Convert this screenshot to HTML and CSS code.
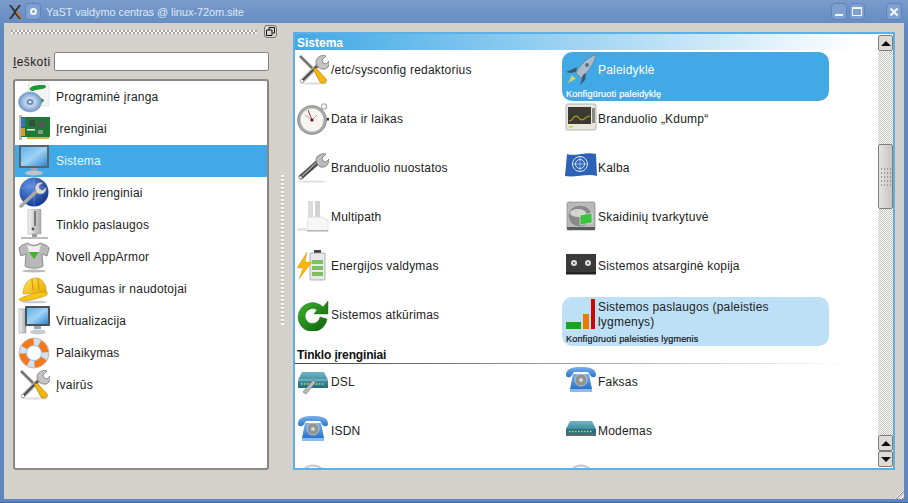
FILE: index.html
```html
<!DOCTYPE html>
<html lang="lt">
<head>
    <meta charset="UTF-8">
    <title>YaST valdymo centras</title>
    <link rel="stylesheet" href="styles.css">
</head>
<body>
    <svg class="sprite" width="0" height="0">
        <defs>
            <linearGradient id="g-steel" x1="0" y1="0" x2="1" y2="1"><stop offset="0" stop-color="#e4e4e4"/><stop offset="1" stop-color="#6c6c6c"/></linearGradient>
            <linearGradient id="g-screen" x1="0" y1="0" x2="1" y2="1"><stop offset="0" stop-color="#5fb2ea"/><stop offset=".5" stop-color="#9fd2f4"/><stop offset="1" stop-color="#2f86cf"/></linearGradient>
            <linearGradient id="g-phone" x1="0" y1="0" x2="0" y2="1"><stop offset="0" stop-color="#79b1ea"/><stop offset="1" stop-color="#2b74cc"/></linearGradient>
            <linearGradient id="g-modem" x1="0" y1="0" x2="0" y2="1"><stop offset="0" stop-color="#6fb6c4"/><stop offset="1" stop-color="#1f6d86"/></linearGradient>
            <linearGradient id="g-green" x1="0" y1="0" x2="1" y2="1"><stop offset="0" stop-color="#3fb52c"/><stop offset="1" stop-color="#0b5f0b"/></linearGradient>
            <linearGradient id="g-tower" x1="0" y1="0" x2="1" y2="0"><stop offset="0" stop-color="#f4f4f4"/><stop offset="1" stop-color="#a9a9a9"/></linearGradient>
            <radialGradient id="g-globe" cx=".35" cy=".3" r=".8"><stop offset="0" stop-color="#5d92e0"/><stop offset="1" stop-color="#0c2f8c"/></radialGradient>
            <radialGradient id="g-disk" cx=".5" cy=".5" r=".5"><stop offset="0" stop-color="#f1f5fb"/><stop offset=".6" stop-color="#a9c4e6"/><stop offset="1" stop-color="#6f95c9"/></radialGradient>
            <linearGradient id="g-hat" x1="0" y1="0" x2="1" y2="1"><stop offset="0" stop-color="#ffe25a"/><stop offset="1" stop-color="#e8a800"/></linearGradient>
        </defs>
        <symbol id="i-software" viewBox="0 0 32 32">
            <path d="M11 1l15 0 5 3 0 21-22 0z" fill="#f3f3f3" stroke="#cfcfcf" stroke-width=".5"/>
            <path d="M12 7c3-3 8-3 13-3 3 0 4 2 2 3-3 2-9 1-12 3-2 0-4-1-3-3z" fill="#1f9a2e"/>
            <path d="M20 17c3 0 6 1 6 3l-5 4-3-2z" fill="#1f9a2e"/>
            <ellipse cx="12" cy="21" rx="11.500" ry="10" fill="url(#g-disk)" stroke="#7b9ac6" stroke-width=".6"/>
            <ellipse cx="12" cy="21" rx="3.600" ry="3" fill="#6f8fb8"/>
            <ellipse cx="12" cy="21" rx="1.400" ry="1.100" fill="#fff"/>
        </symbol>
        <symbol id="i-card" viewBox="0 0 32 32">
            <rect x="1" y="2" width="3" height="25" fill="#bcbcbc"/>
            <rect x="3" y="4" width="29" height="20" fill="#1f7a33"/>
            <rect x="3" y="5" width="4" height="9" fill="#3d6fc4"/>
            <rect x="3" y="15" width="4" height="8" fill="#d89b2a"/>
            <rect x="11" y="7" width="6" height="6" fill="#3b4a40"/>
            <rect x="20" y="8" width="7" height="7" fill="#4e5a52"/>
            <rect x="9" y="16" width="8" height="1.500" fill="#eee"/>
            <rect x="20" y="17" width="5" height="4" fill="#8a948c"/>
            <rect x="9" y="24" width="22" height="2" fill="#d9b23a"/>
        </symbol>
        <symbol id="i-monitor" viewBox="0 0 32 32">
            <rect x="1" y="0" width="30" height="23" rx="1" fill="#5c6268"/>
            <rect x="3" y="2" width="26" height="19" fill="url(#g-screen)"/>
            <rect x="13" y="23" width="6" height="3" fill="#9aa5ae"/>
            <ellipse cx="16" cy="28" rx="9" ry="2.600" fill="#b9c4cc"/>
        </symbol>
        <symbol id="i-netwrench" viewBox="0 0 32 32">
            <circle cx="16" cy="15" r="14.500" fill="url(#g-globe)"/>
            <path d="M3 12c8-3 18-3 26 0M16 1v28" stroke="#7ea4e4" stroke-width=".5" fill="none"/>
            <path d="M3 29L19 14" stroke="url(#g-steel)" stroke-width="3.600" stroke-linecap="round"/>
            <path d="M17 11c0-4 4-7 8-5l-4 3 1 3 3 1 3-3c1 5-3 8-7 7-2 0-4-3-4-6z" fill="#d9d9d9" stroke="#666" stroke-width=".6"/>
        </symbol>
        <symbol id="i-server" viewBox="0 0 32 32">
            <rect x="10" y="0" width="13" height="25" fill="url(#g-tower)" stroke="#9a9a9a" stroke-width=".5"/>
            <path d="M17 2v15" stroke="#666" stroke-width="1.600"/>
            <circle cx="15" cy="20" r="1.400" fill="#555"/>
            <rect x="14" y="25" width="5" height="3" fill="#9a9a9a"/>
            <rect x="3" y="28" width="27" height="2" fill="#bcbcbc"/>
        </symbol>
        <symbol id="i-armor" viewBox="0 0 32 32">
            <path d="M1 8c0-3 5-5 9-6 3 3 9 3 12 0 4 1 9 3 9 6l-2 7-5-2 1 12c-3 3-15 3-18 0l1-12-5 2z" fill="#b9b9b9" stroke="#6a6a6a" stroke-width=".7"/>
            <path d="M9 3c3 3 11 3 14 0l-2 8H11z" fill="#eee"/>
            <path d="M11 11h10l-5 7z" fill="#41b52c"/>
            <ellipse cx="16" cy="30" rx="12" ry="1.500" fill="#8b8b8b" opacity=".6"/>
        </symbol>
        <symbol id="i-hat" viewBox="0 0 32 32">
            <path d="M5 21C5 11 11 5 18 5c6 0 11 6 10 15z" fill="url(#g-hat)" stroke="#c48d00" stroke-width=".5"/>
            <path d="M14 6l1 11M20 5l1 12" stroke="#d99f00" stroke-width="1.400" fill="none"/>
            <path d="M1 26c6-3 20-8 28-7 1 2 0 3-2 4-6 2-16 5-23 5-2 0-3-1-3-2z" fill="#f7c514" stroke="#b98500" stroke-width=".5"/>
            <ellipse cx="16" cy="29" rx="13" ry="1.300" fill="#999" opacity=".5"/>
        </symbol>
        <symbol id="i-virtual" viewBox="0 0 32 32">
            <rect x="1" y="4" width="7" height="24" fill="url(#g-tower)" stroke="#8a8a8a" stroke-width=".5"/>
            <rect x="7" y="1" width="25" height="20" rx="1" fill="#4c5157"/>
            <rect x="9" y="3" width="21" height="16" fill="url(#g-screen)"/>
            <rect x="16" y="21" width="7" height="3" fill="#9aa5ae"/>
            <ellipse cx="20" cy="27" rx="8" ry="2.400" fill="#c4ccd2"/>
        </symbol>
        <symbol id="i-buoy" viewBox="0 0 32 32">
            <circle cx="16" cy="16" r="15" fill="none" stroke="#a9a9a9" stroke-width=".8"/>
            <circle cx="16" cy="16" r="11" fill="none" stroke="#f07a1c" stroke-width="7"/>
            <circle cx="16" cy="16" r="11" fill="none" stroke="#cfe2f7" stroke-width="7" stroke-dasharray="6 11.280" transform="rotate(-3 16 16)"/>
            <circle cx="16" cy="16" r="7.500" fill="#fff" stroke="#9dc2ee" stroke-width="1"/>
        </symbol>
        <symbol id="i-tools" viewBox="0 0 32 32">
            <ellipse cx="17" cy="29.500" rx="13" ry="1.200" fill="#bbb" opacity=".5"/>
            <path d="M2 3l2-2 15 15-2 2z" fill="#777"/>
            <path d="M5 27L22 10" stroke="url(#g-steel)" stroke-width="4.500" stroke-linecap="round"/>
            <path d="M5 27L20 12" stroke="#333" stroke-width="1.400"/>
            <circle cx="5" cy="27" r="1.200" fill="#fff"/>
            <path d="M19 8c0-4 5-8 10-6l-4 4 1 3 3 1 3-3c1 5-2 9-7 8-2 0-6-3-6-7z" fill="#c4c4c4" stroke="#6a6a6a" stroke-width=".7"/>
            <path d="M16 15l3-1 10 11c1 2 0 4-3 4-1 0-2 0-3-1z" fill="#f5b70a" stroke="#97700a" stroke-width=".6"/>
        </symbol>
        <symbol id="i-clock" viewBox="0 0 32 32">
            <circle cx="27" cy="3.500" r="2.600" fill="none" stroke="#b5b5b5" stroke-width="1.400"/>
            <rect x="29.500" y="15" width="2.500" height="2.500" fill="#333"/>
            <circle cx="15" cy="17" r="14.500" fill="#a9a9a9" stroke="#7a7a7a" stroke-width=".7"/>
            <circle cx="15" cy="17" r="11.500" fill="#f7f4f2"/>
            <path d="M15 17L11 7" stroke="#c22" stroke-width="1"/>
            <path d="M15 17L8 12M15 17l5-5" stroke="#999" stroke-width=".8"/>
            <circle cx="15" cy="17" r="1.600" fill="#611"/>
        </symbol>
        <symbol id="i-wrench" viewBox="0 0 32 32">
            <ellipse cx="15" cy="29.500" rx="14" ry="1" fill="#bbb" opacity=".5"/>
            <path d="M4 25L21 10" stroke="#4c4c4c" stroke-width="5" stroke-linecap="round"/>
            <path d="M5 24L19 11" stroke="#aaa" stroke-width="1.200"/>
            <circle cx="3.500" cy="25.500" r="1.300" fill="#fff"/>
            <path d="M19 8c0-4 5-7 10-6l-4 4 1 3 3 1 3-3c0 5-3 9-8 8-2 0-5-3-5-7z" fill="#bcbcbc" stroke="#666" stroke-width=".7"/>
        </symbol>
        <symbol id="i-multipath" viewBox="0 0 32 32">
            <rect x="11" y="0" width="5" height="22" fill="#dcdcdc"/>
            <rect x="18" y="0" width="5" height="18" fill="#d2d2d2"/>
            <path d="M11 16h14l6 3v11H10z" fill="#f6f6f6" stroke="#c9c9c9" stroke-width=".5"/>
            <rect x="0" y="27" width="10" height="3" fill="#e4e4e4"/>
            <rect x="10" y="29" width="21" height="1.500" fill="#b5b5b5"/>
        </symbol>
        <symbol id="i-battery" viewBox="0 0 32 32">
            <rect x="17" y="0" width="7" height="3" fill="#444"/>
            <rect x="13" y="3" width="15" height="27" rx="1" fill="#e9e9e9" stroke="#999" stroke-width=".7"/>
            <rect x="15" y="10" width="11" height="4" fill="#7dc25d"/>
            <rect x="15" y="16" width="11" height="4" fill="#7dc25d"/>
            <rect x="15" y="22" width="11" height="4" fill="#7dc25d"/>
            <path d="M10 2L0 18h6L2 29l13-17H8z" fill="#f7b611" stroke="#d98d00" stroke-width=".4"/>
        </symbol>
        <symbol id="i-refresh" viewBox="0 0 32 32">
            <path d="M26 8A14.500 14.500 0 1 0 30 20l-7-2a7.500 7.500 0 1 1-3-7l-3 4h14V2z" fill="url(#g-green)" stroke="#0b5f0b" stroke-width=".4"/>
        </symbol>
        <symbol id="i-rocket" viewBox="0 0 32 32">
            <path d="M3 29L7 21l4 4z" fill="#c9d46a"/>
            <path d="M31 1C22 3 15 11 11 19l5 5C23 18 29 10 31 1z" fill="#a9bccc" stroke="#53697d" stroke-width=".5"/>
            <path d="M12 13L1 18l4 1 6-1zM18 21l-3 10 5-5 1-7z" fill="#3f5870"/>
            <circle cx="22" cy="11" r="2" fill="#54708a"/>
        </symbol>
        <symbol id="i-kdump" viewBox="0 0 32 32">
            <rect x="1" y="1" width="30" height="26" rx="2" fill="#e9e7df" stroke="#9a9a9a" stroke-width=".7"/>
            <rect x="3" y="4" width="23" height="17" fill="#3a3a30"/>
            <path d="M4 18c4 0 4-5 7-5s3 4 6 4 3-4 8-4" stroke="#b6a92c" stroke-width="1.200" fill="none"/>
            <rect x="27" y="5" width="3" height="15" fill="#8a8a8a"/>
            <rect x="4" y="23" width="4" height="1.600" fill="#cc3"/>
        </symbol>
        <symbol id="i-flag" viewBox="0 0 32 32">
            <path d="M2 2c8 3 20-3 29 0l1 22c-9-3-22 2-32 0z" fill="#2c62b8"/>
            <circle cx="15" cy="12" r="7.500" fill="none" stroke="#dfe9f7" stroke-width="1"/>
            <circle cx="15" cy="12" r="4.500" fill="none" stroke="#dfe9f7" stroke-width="1"/>
            <path d="M15 5v14M8 12h14" stroke="#dfe9f7" stroke-width=".6"/>
        </symbol>
        <symbol id="i-disk" viewBox="0 0 32 32">
            <rect x="2" y="1" width="28" height="28" rx="2" fill="#b9b9b9" stroke="#777" stroke-width=".6"/>
            <ellipse cx="15" cy="15" rx="12" ry="11" fill="#8a8a8a" stroke="#ddd" stroke-width=".6"/>
            <ellipse cx="13" cy="12" rx="8" ry="4" fill="#d4d4d4"/>
            <path d="M15 14l12-2 0 10-12 2z" fill="#3fc23f" stroke="#fff" stroke-width=".5"/>
            <rect x="2" y="26" width="28" height="3" fill="#5a5a5a"/>
        </symbol>
        <symbol id="i-tape" viewBox="0 0 32 32">
            <rect x="1" y="4" width="30" height="20" fill="#3a3a3a"/>
            <rect x="1" y="22" width="30" height="2.500" fill="#222"/>
            <circle cx="9" cy="13" r="3" fill="#dcdcdc"/>
            <circle cx="23" cy="13" r="3" fill="#dcdcdc"/>
            <circle cx="9" cy="13" r="1" fill="#555"/>
            <circle cx="23" cy="13" r="1" fill="#555"/>
        </symbol>
        <symbol id="i-levels" viewBox="0 0 32 32">
            <rect x="1" y="23" width="15" height="7" fill="#1ba51b"/>
            <rect x="18" y="15" width="6" height="15" fill="#ea7a06"/>
            <rect x="26" y="0" width="4" height="30" fill="#c90808"/>
        </symbol>
        <symbol id="i-dsl" viewBox="0 0 32 32">
            <path d="M5 6h22l4 8v8H1v-8z" fill="url(#g-modem)"/>
            <path d="M1 14h30" stroke="#d7eef2" stroke-width=".6"/>
            <path d="M4 18h24" stroke="#b4dd6a" stroke-width="1.400" stroke-dasharray="1.500 1.500"/>
            <path d="M6 26l10-12 3 2L9 28z" fill="#bcbcbc" stroke="#555" stroke-width=".5"/>
        </symbol>
        <symbol id="i-phone" viewBox="0 0 32 32">
            <path d="M1 9C1 2 8 1 16 1s15 1 15 8c0 3-5 3-6 0-1-1-1-3-3-3H10C8 6 8 8 7 9c-1 3-6 3-6 0z" fill="url(#g-phone)"/>
            <path d="M8 8h16l3 15H5z" fill="url(#g-phone)"/>
            <rect x="5" y="23" width="22" height="3" fill="#8cbcee"/>
            <circle cx="16" cy="14" r="6" fill="#8f9490" stroke="#ccd" stroke-width=".8"/>
            <circle cx="16" cy="14" r="2" fill="#d4d6d2"/>
        </symbol>
        <symbol id="i-modem" viewBox="0 0 32 32">
            <path d="M5 6h22l4 8v6H1v-6z" fill="url(#g-modem)"/>
            <rect x="1" y="14" width="30" height="5" fill="#2b6f80"/>
            <path d="M4 16.500h24" stroke="#b4dd6a" stroke-width="1.600" stroke-dasharray="1.500 1.500"/>
            <rect x="1" y="19" width="30" height="2" fill="#666"/>
        </symbol>
        <symbol id="i-wifi" viewBox="0 0 32 32">
            <path d="M6 6c6-6 14-6 20 0M10 9c4-3 8-3 12 0" stroke="#b8c9e4" stroke-width="2" fill="none"/>
        </symbol>
    </svg>

    <div class="window">
        <div class="titlebar">
            <svg class="logo" viewBox="0 0 16 16" width="16" height="16">
                <path d="M2 1l5 7-5 7h2l4-5 4 5h2L9 8l5-7h-2L8 6 4 1z" fill="#333"/>
                <path d="M9 9l4 5h2l-5-7z" fill="#c8741c"/>
            </svg>
            <span class="title-btn menu-btn"><span class="menu-dot"></span></span>
            <span class="title-text">YaST valdymo centras @ linux-72om.site</span>
            <span class="title-btn min-btn"><span class="min-glyph"></span></span>
            <span class="title-btn"><span class="max-glyph"></span></span>
            <span class="title-btn close-btn">
                <svg viewBox="0 0 10 10" width="10" height="10"><path d="M1.500 1.500l7 7M8.500 1.500l-7 7" stroke="#f2f6fb" stroke-width="2.400"/></svg>
            </span>
        </div>

        <div class="client">
            <div class="left">
                <div class="toolbar">
                    <div class="handle"></div>
                    <span class="dock-btn">
                        <svg viewBox="0 0 9 9" width="9" height="9"><path d="M3 .5h5.500V6H6.500M.5 3H6v5.500H.5zM3 3V.5" fill="none" stroke="#111" stroke-width="1"/></svg>
                    </span>
                </div>
                <div class="search">
                    <label class="search-label" for="q"><u>I</u>eškoti</label>
                    <input id="q" class="search-input" type="text">
                </div>
                <div class="list">
                    <div class="row"><svg class="ico"><use href="#i-software"/></svg>Programinė įranga</div>
                    <div class="row"><svg class="ico"><use href="#i-card"/></svg>Įrenginiai</div>
                    <div class="row selected"><svg class="ico"><use href="#i-monitor"/></svg>Sistema</div>
                    <div class="row"><svg class="ico"><use href="#i-netwrench"/></svg>Tinklo įrenginiai</div>
                    <div class="row"><svg class="ico"><use href="#i-server"/></svg>Tinklo paslaugos</div>
                    <div class="row"><svg class="ico"><use href="#i-armor"/></svg>Novell AppArmor</div>
                    <div class="row"><svg class="ico"><use href="#i-hat"/></svg>Saugumas ir naudotojai</div>
                    <div class="row"><svg class="ico"><use href="#i-virtual"/></svg>Virtualizacija</div>
                    <div class="row"><svg class="ico"><use href="#i-buoy"/></svg>Palaikymas</div>
                    <div class="row"><svg class="ico"><use href="#i-tools"/></svg>Įvairūs</div>
                </div>
            </div>

            <div class="splitter"><div class="splitter-dots"></div></div>

            <div class="panel">
                <div class="content">
                    <div class="group-title first">Sistema</div>
                    <div class="items">
                        <div class="item"><div class="item-top"><svg class="ico"><use href="#i-tools"/></svg><span>/etc/sysconfig redaktorius</span></div></div>
                        <div class="item active"><div class="item-top"><svg class="ico"><use href="#i-rocket"/></svg><span>Paleidyklė</span></div><div class="item-desc">Konfigūruoti paleidyklę</div></div>
                        <div class="item"><div class="item-top"><svg class="ico"><use href="#i-clock"/></svg><span>Data ir laikas</span></div></div>
                        <div class="item"><div class="item-top"><svg class="ico"><use href="#i-kdump"/></svg><span>Branduolio „Kdump“</span></div></div>
                        <div class="item"><div class="item-top"><svg class="ico"><use href="#i-wrench"/></svg><span>Branduolio nuostatos</span></div></div>
                        <div class="item"><div class="item-top"><svg class="ico"><use href="#i-flag"/></svg><span>Kalba</span></div></div>
                        <div class="item"><div class="item-top"><svg class="ico"><use href="#i-multipath"/></svg><span>Multipath</span></div></div>
                        <div class="item"><div class="item-top"><svg class="ico"><use href="#i-disk"/></svg><span>Skaidinių tvarkytuvė</span></div></div>
                        <div class="item"><div class="item-top"><svg class="ico"><use href="#i-battery"/></svg><span>Energijos valdymas</span></div></div>
                        <div class="item"><div class="item-top"><svg class="ico"><use href="#i-tape"/></svg><span>Sistemos atsarginė kopija</span></div></div>
                        <div class="item"><div class="item-top"><svg class="ico"><use href="#i-refresh"/></svg><span>Sistemos atkūrimas</span></div></div>
                        <div class="item hover"><div class="item-top"><svg class="ico"><use href="#i-levels"/></svg><span>Sistemos paslaugos (paleisties lygmenys)</span></div><div class="item-desc">Konfigūruoti paleisties lygmenis</div></div>
                    </div>
                    <div class="group-title second">Tinklo įrenginiai</div>
                    <div class="items">
                        <div class="item"><div class="item-top"><svg class="ico"><use href="#i-dsl"/></svg><span>DSL</span></div></div>
                        <div class="item"><div class="item-top"><svg class="ico"><use href="#i-phone"/></svg><span>Faksas</span></div></div>
                        <div class="item"><div class="item-top"><svg class="ico"><use href="#i-phone"/></svg><span>ISDN</span></div></div>
                        <div class="item"><div class="item-top"><svg class="ico"><use href="#i-modem"/></svg><span>Modemas</span></div></div>
                        <div class="item"><div class="item-top"><svg class="ico"><use href="#i-wifi"/></svg></div></div>
                        <div class="item"><div class="item-top"><svg class="ico"><use href="#i-wifi"/></svg></div></div>
                    </div>
                </div>
                <div class="scrollbar">
                    <span class="sb-btn"><span class="arrow-up"></span></span>
                    <div class="sb-track sb-track-top"></div>
                    <div class="sb-thumb"><div class="sb-grip"></div></div>
                    <div class="sb-track sb-track-rest"></div>
                    <span class="sb-btn"><span class="arrow-up"></span></span>
                    <span class="sb-btn"><span class="arrow-down"></span></span>
                </div>
            </div>
            <div class="grip"></div>
        </div>
    </div>
</body>
</html>
```

FILE: styles.css
```css
* {
    box-sizing: border-box;
}
html, body {
    margin: 0;
    height: 100%;
    overflow: hidden;
}
body {
    font-family: "Liberation Sans", Arial, sans-serif;
    font-size: 12px;
    color: #222;
    background: #4f77ad;
}
.sprite {
    display: block;
}
.ico {
    width: 32px;
    height: 32px;
    flex: none;
}

/* window frame */
.window {
    width: 908px;
    height: 503px;
    display: flex;
    flex-direction: column;
    padding: 0 4px 3px 4px;
    background: linear-gradient(#7a9bcb, #5f87bf 30px);
    border-bottom: 1px solid #3f6596;
}
.titlebar {
    height: 23px;
    flex: none;
    display: flex;
    align-items: center;
    gap: 2px;
}
.logo {
    margin-left: 3px;
}
.title-btn {
    width: 16px;
    height: 17px;
    border-radius: 4px;
    border: 1px solid #5d83ba;
    background: #7fa1d2;
    display: flex;
    align-items: center;
    justify-content: center;
    flex: none;
}
.menu-dot {
    width: 7px;
    height: 7px;
    border-radius: 50%;
    border: 2px solid #f2f6fb;
}
.title-text {
    margin-left: 3px;
    flex: 1;
    font-size: 11px;
    letter-spacing: -.08px;
    color: #dfe9f6;
}
.min-glyph {
    width: 8px;
    height: 2px;
    margin-top: 6px;
    background: #f2f6fb;
}
.max-glyph {
    width: 10px;
    height: 9px;
    border: 1px solid #f2f6fb;
    border-top-width: 2px;
}
.close-btn {
    margin-left: 19px;
    margin-right: 2px;
}

/* client area */
.client {
    flex: 1;
    min-height: 0;
    position: relative;
    display: flex;
    background: #d4d0cc;
    padding: 0 9px 29px 7px;
}
.left {
    width: 266px;
    flex: none;
    display: flex;
    flex-direction: column;
    padding: 2px 0 0 2px;
}
.toolbar {
    height: 13px;
    margin-left: -2px;
    display: flex;
    align-items: center;
    justify-content: space-between;
}
.handle {
    width: 246px;
    height: 4px;
    background: repeating-conic-gradient(#f5f3f1 0 25%, #a8a4a0 0 50%) 0 0 / 4px 4px;
}
.dock-btn {
    width: 13px;
    height: 13px;
    border: 1px solid #77736f;
    border-radius: 3px;
    background: #dad7d3;
    display: flex;
    align-items: center;
    justify-content: center;
}
.search {
    display: flex;
    align-items: center;
    margin-top: 14px;
    margin-right: 8px;
    height: 19px;
    gap: 5px;
}
.search-label {
    width: 36px;
    flex: none;
    letter-spacing: .4px;
}
.search-input {
    flex: 1;
    min-width: 0;
    height: 19px;
    background: #fff;
    border: 1px solid #86827e;
    border-radius: 2px;
    outline: none;
}
.list {
    flex: 1;
    margin-top: 8px;
    margin-right: 8px;
    background: #fff;
    border: 2px solid #8b8784;
    border-radius: 3px;
}
.row {
    height: 32px;
    display: flex;
    align-items: center;
    gap: 6px;
    padding-left: 3px;
    letter-spacing: .22px;
}
.row.selected {
    background: #41a9e6;
    color: #eef7fd;
}

/* splitter */
.splitter {
    width: 16px;
    flex: none;
    padding: 152px 0 0 4px;
}
.splitter-dots {
    width: 3px;
    height: 150px;
    background: repeating-linear-gradient(#fbfaf9 0 2px, #b5b1ad 2px 3px, transparent 3px 4px);
}

/* right panel */
.panel {
    flex: 1;
    min-width: 0;
    min-height: 0;
    margin-top: 9px;
    display: flex;
    overflow: hidden;
    border: 2px solid #5cb0e6;
    background: #fff;
}
.content {
    flex: 1;
    min-width: 0;
    overflow: hidden;
}
.group-title {
    font-weight: bold;
    padding-left: 2px;
    white-space: nowrap;
}
.group-title.first {
    height: 18px;
    line-height: 18px;
    color: #fff;
    background: linear-gradient(90deg, #41a9e6, #fff 97%);
    border-bottom: 2px solid #fff;
}
.group-title.second {
    height: 17px;
    line-height: 17px;
    margin-top: 1px;
    color: #111;
    letter-spacing: -.15px;
    border-bottom: 1px solid;
    border-image: linear-gradient(90deg, #444, #fff 95%) 1;
}
.items {
    display: grid;
    grid-template-columns: 268px 267px;
    margin-left: -1px;
}
.item {
    height: 49px;
    border-radius: 10px;
    padding: 0 8px 0 3px;
    display: flex;
    flex-direction: column;
    letter-spacing: .2px;
    overflow: hidden;
}
.item:nth-child(odd) .item-top {
    gap: 2px;
}
.item-top {
    height: 36px;
    flex: none;
    display: flex;
    align-items: center;
    gap: 1px;
    line-height: 15px;
}
.item-desc {
    margin-top: 1px;
    font-size: 9px;
    line-height: 11px;
    padding-left: 1px;
    letter-spacing: .2px;
    white-space: nowrap;
    -webkit-text-stroke: .2px;
}
.item.active {
    background: #41a9e6;
    color: #fff;
}
.item.hover {
    background: #bde0f7;
}
.item.hover .item-desc {
    color: #111;
}

/* scrollbar */
.scrollbar {
    width: 15px;
    flex: none;
    display: flex;
    flex-direction: column;
    padding-top: 1px;
    padding-bottom: 1px;
}
.sb-btn {
    height: 16px;
    flex: none;
    border: 1px solid #7f7b78;
    border-radius: 2px;
    background: #dedbd7;
    display: flex;
    align-items: center;
    justify-content: center;
}
.arrow-up, .arrow-down {
    width: 0;
    height: 0;
    border-left: 5px solid transparent;
    border-right: 5px solid transparent;
}
.arrow-up {
    border-bottom: 5px solid #111;
}
.arrow-down {
    border-top: 5px solid #111;
}
.sb-track {
    background: repeating-conic-gradient(#c6c3c0 0 25%, #fff 0 50%) 0 0 / 2px 2px;
}
.sb-track-top {
    height: 93px;
    flex: none;
}
.sb-track-rest {
    flex: 1;
}
.sb-thumb {
    height: 65px;
    flex: none;
    border: 1px solid #7f7b78;
    border-radius: 2px;
    background: linear-gradient(90deg, #e6e3e0, #c9c5c1);
    display: flex;
    align-items: center;
    justify-content: center;
}
.sb-grip {
    width: 11px;
    height: 20px;
    background: radial-gradient(circle, #9c9894 1px, transparent 1.100px) 0 0 / 3px 4px;
}
.grip {
    position: absolute;
    right: 0;
    bottom: 0;
    width: 12px;
    height: 12px;
    background: repeating-linear-gradient(135deg, transparent 0 2px, #f4f2f0 2px 3px, #8f8b88 3px 4px);
    clip-path: polygon(100% 0, 100% 100%, 0 100%);
}
```
